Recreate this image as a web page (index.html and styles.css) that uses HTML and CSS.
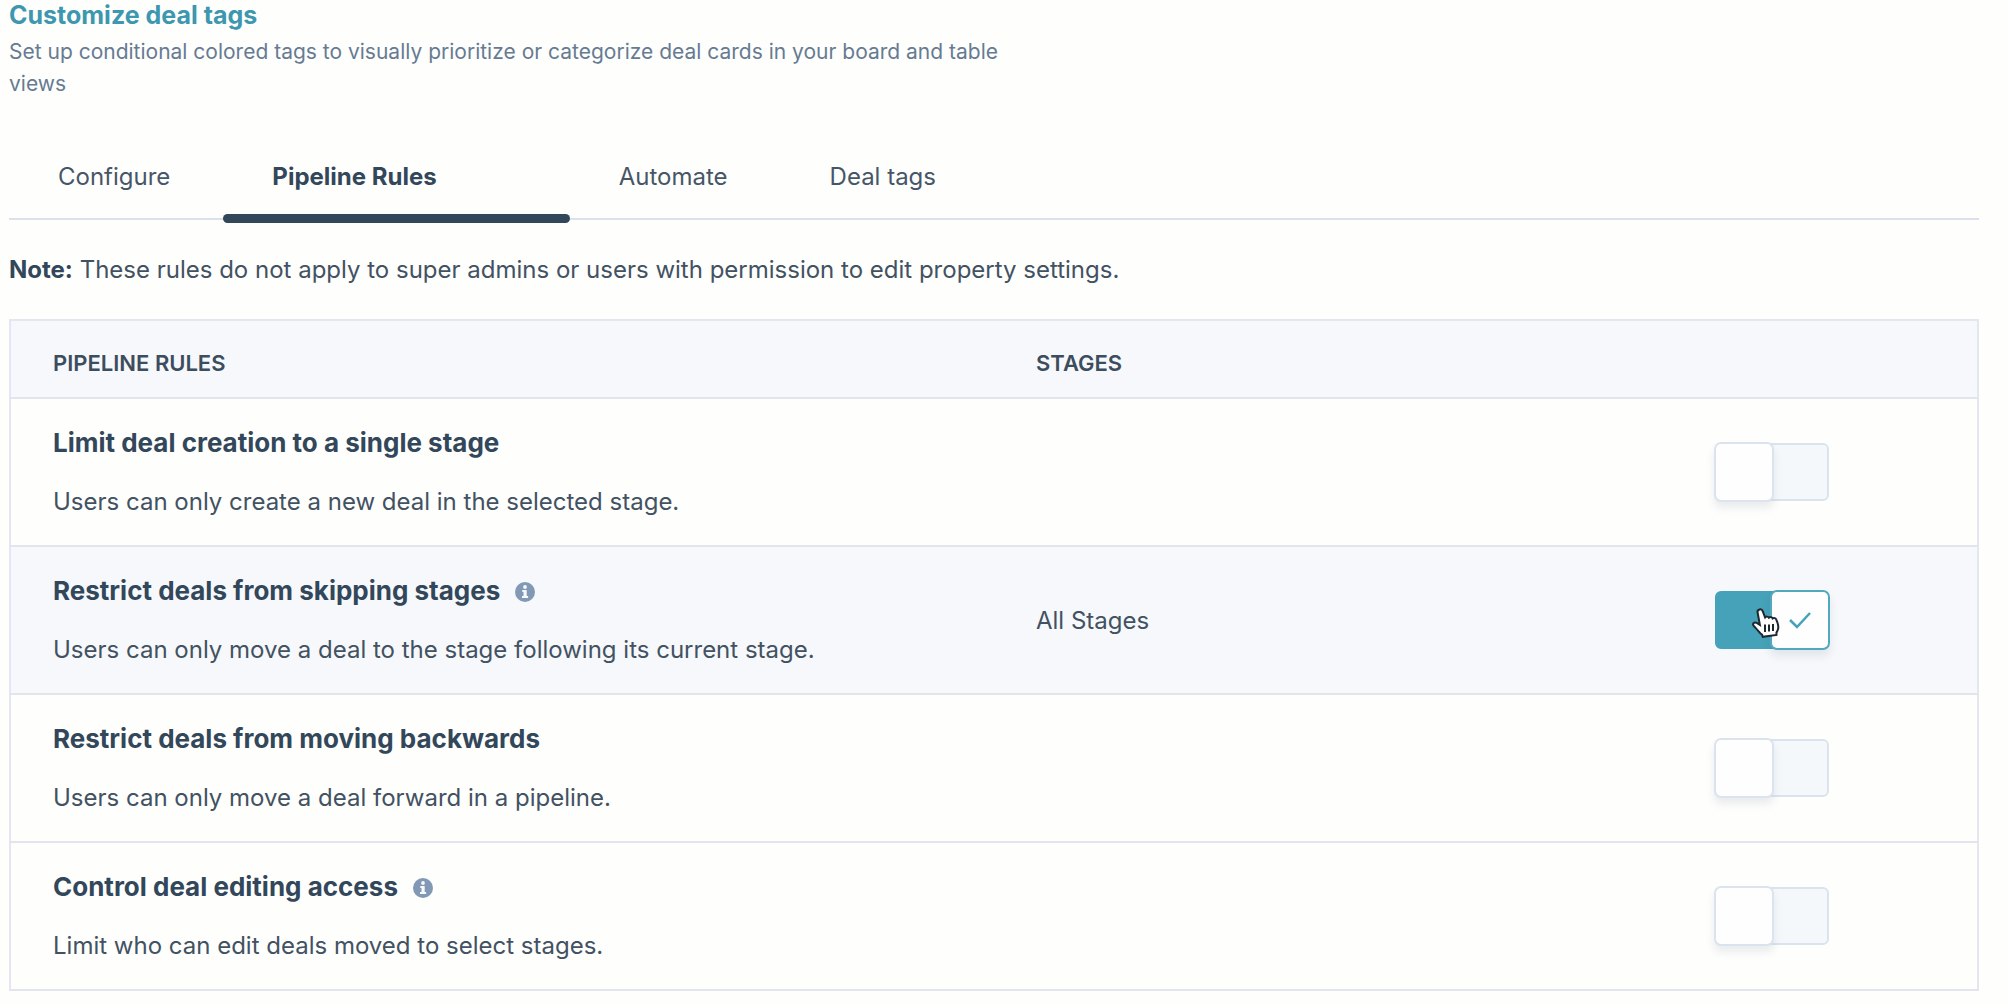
FILE: index.html
```
<!DOCTYPE html>
<html lang="en">
<head>
	<meta charset="UTF-8">
	<title>Pipeline Rules</title>
	<link rel="stylesheet" href="styles.css">
</head>
<body>

	<div class="intro">
		<a class="intro-link" href="#">Customize deal tags</a>
		<p class="intro-text">Set up conditional colored tags to visually prioritize or categorize deal cards in your board and table views</p>
	</div>

	<nav class="tabs">
		<a class="tab" href="#">Configure</a>
		<a class="tab active" href="#" aria-current="page">Pipeline Rules</a>
		<a class="tab" href="#">Automate</a>
		<a class="tab" href="#">Deal tags</a>
	</nav>

	<p class="note"><strong>Note:</strong> These rules do not apply to super admins or users with permission to edit property settings.</p>

	<table class="rules">
		<thead>
			<tr>
				<th class="col-rule">Pipeline Rules</th>
				<th class="col-stage">Stages</th>
				<th class="col-switch"></th>
			</tr>
		</thead>
		<tbody>
			<tr>
				<td>
					<label class="rule-name" for="rule-create">Limit deal creation to a single stage</label>
					<p class="rule-text">Users can only create a new deal in the selected stage.</p>
				</td>
				<td></td>
				<td class="col-switch">
					<span class="switch">
						<input type="checkbox" id="rule-create">
						<span class="knob"></span>
					</span>
				</td>
			</tr>
			<tr class="current">
				<td>
					<label class="rule-name" for="rule-skip">Restrict deals from skipping stages</label>
					<svg class="info" viewBox="0 0 20 20"><circle cx="10" cy="10" r="10"/><circle class="mark" cx="10" cy="5" r="1.9"/><path class="mark" d="M7.3 8h4.4v6h1.4v2H7v-2h1.5v-4H7.3z"/></svg>
					<p class="rule-text">Users can only move a deal to the stage following its current stage.</p>
				</td>
				<td>All Stages</td>
				<td class="col-switch">
					<span class="switch">
						<input type="checkbox" id="rule-skip" checked>
						<span class="knob"><svg class="check" viewBox="0 0 24 18"><path d="M2 9l7 7L22 2"/></svg></span>
						<svg class="pointer" viewBox="0 0 28 30"><path d="M7.5 1.5c1.5-.5 2.700.3 3.200 1.700l2.400 6.300c.9-1.200 3-1.200 3.800.2 1.200-1 3.100-.8 3.700.7 1.400-.9 3.200-.2 3.700 1.200 1.400 3.200 2.400 6 1.900 9-.3 1.800-1.400 3-1.800 4.400l.1 2-13.700 1.800-.8-2.100c-2.500-1.700-4-4.500-6.200-6.600-1.300-1.200-2.700-2.200-2.800-3.700 0-1.700 2-2.300 3.700-1.500l3.200 2L5.600 4.500c-.4-1.200.5-2.500 1.900-3z"/><path class="lines" d="M13 16.500v7.500M17 16.500v7M21 16v7"/></svg>
					</span>
				</td>
			</tr>
			<tr>
				<td>
					<label class="rule-name" for="rule-back">Restrict deals from moving backwards</label>
					<p class="rule-text">Users can only move a deal forward in a pipeline.</p>
				</td>
				<td></td>
				<td class="col-switch">
					<span class="switch">
						<input type="checkbox" id="rule-back">
						<span class="knob"></span>
					</span>
				</td>
			</tr>
			<tr>
				<td>
					<label class="rule-name" for="rule-access">Control deal editing access</label>
					<svg class="info" viewBox="0 0 20 20"><circle cx="10" cy="10" r="10"/><circle class="mark" cx="10" cy="5" r="1.9"/><path class="mark" d="M7.3 8h4.4v6h1.4v2H7v-2h1.5v-4H7.3z"/></svg>
					<p class="rule-text">Limit who can edit deals moved to select stages.</p>
				</td>
				<td></td>
				<td class="col-switch">
					<span class="switch">
						<input type="checkbox" id="rule-access">
						<span class="knob"></span>
					</span>
				</td>
			</tr>
		</tbody>
	</table>

</body>
</html>
```
FILE: styles.css
```
* {
	box-sizing: border-box;
	margin: 0;
	padding: 0;
}
body {
	padding: 0 29px 14px 9px;
	background: #fefefd;
	color: #425262;
	font: 24px/32px Inter, "Open Sans", sans-serif;
}
a {
	text-decoration: none;
}

/* intro */
.intro {
	max-width: 1020px;
}
.intro-link {
	display: block;
	color: #3c97af;
	font-size: 25px;
	font-weight: 700;
	line-height: 30px;
}
.intro-text {
	padding-top: 6px;
	color: #667b92;
	font-size: 21px;
}

/* tabs */
.tabs {
	display: flex;
	margin-top: 29px;
	border-bottom: 2px solid #dbe1ea;
}
.tab {
	position: relative;
	padding: 32px 53px 25px 49px;
	color: #475667;
	white-space: nowrap;
}
.tab.active {
	padding-right: 133px;
	color: #33475b;
	font-weight: 700;
}
.tab.active::after {
	content: "";
	position: absolute;
	left: 0;
	right: 0;
	bottom: -5px;
	height: 9px;
	border-radius: 5px;
	background: #33475b;
}

.note {
	padding: 34px 0 33px;
}
strong {
	color: #33475b;
	font-weight: 700;
}

/* rules table */
.rules {
	width: 100%;
	table-layout: fixed;
	border-collapse: collapse;
	border: 2px solid #e4e7f0;
}
.rules tr {
	border-bottom: 2px solid #e1e5ee;
}
.rules th {
	padding: 26px 42px 18px;
	color: #3c4d5e;
	font-size: 22px;
	font-weight: 600;
	text-align: left;
	text-transform: uppercase;
}
.rules td {
	padding: 28px 42px 27px;
	vertical-align: middle;
}
.rules thead,
.rules .current {
	background: #f6f8fb;
}
.col-rule {
	width: 50%;
}
.col-stage {
	width: 29%;
}
.rules .col-switch {
	padding: 0 0 0 2px;
}
.rule-name {
	color: #33475b;
	font-size: 26px;
	font-weight: 700;
}
.rule-text {
	padding-top: 26px;
}
.info {
	width: 20px;
	height: 20px;
	margin-left: 8px;
	vertical-align: -2px;
	fill: #8299b6;
}
.info .mark {
	fill: #f6f8fb;
}

/* switch */
.switch {
	display: flex;
	position: relative;
	width: 114px;
	margin: 0 auto;
}
.switch input {
	width: 114px;
	height: 58px;
	appearance: none;
	border: 2px solid #dbe4ee;
	border-radius: 6px;
	background: #f5f8fb;
}
.knob {
	display: flex;
	align-items: center;
	justify-content: center;
	position: absolute;
	top: -1px;
	left: -1px;
	width: 60px;
	height: 60px;
	border: 2px solid #dbe4ee;
	border-radius: 7px;
	background: #fefefe;
	box-shadow: 0 6px 8px rgba(51, 71, 91, .1);
	pointer-events: none;
}
.switch input:checked {
	border-color: #45a2b9;
	background: #45a2b9;
}
.switch input:checked + .knob {
	left: auto;
	right: -1px;
	border-color: #52a9be;
}
.check {
	width: 24px;
	height: 18px;
	fill: none;
	stroke: #45a2b9;
	stroke-width: 2.5;
}
.pointer {
	position: absolute;
	top: 17px;
	left: 37px;
	width: 28px;
	height: 30px;
	fill: #fff;
	stroke: #1d2730;
	stroke-width: 2;
	overflow: visible;
	pointer-events: none;
}
```
